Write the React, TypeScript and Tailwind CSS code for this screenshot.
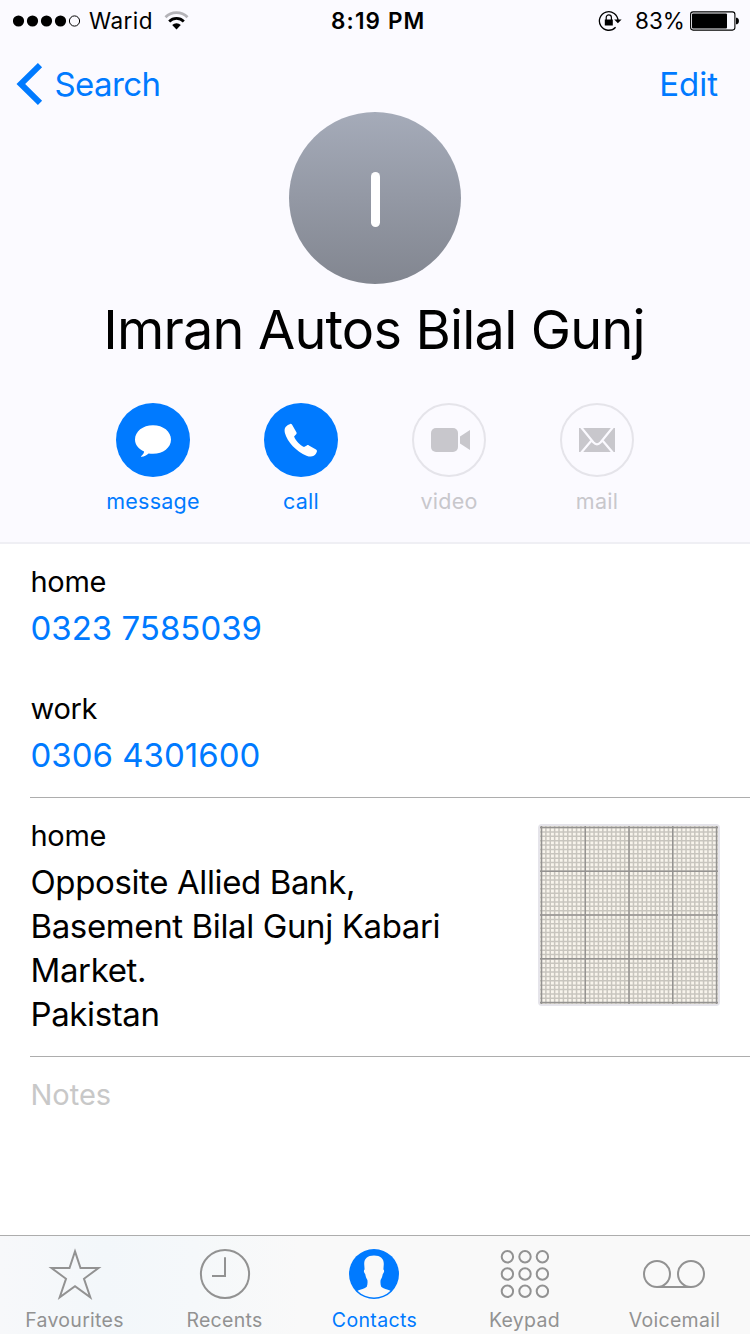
import type { ReactNode } from 'react';

const BLUE = '#007aff';
const GRAY = '#929292';

function StatusBar() {
  return (
    <div className="flex h-[41px] items-center pl-[13px] text-[22.5px] leading-10 text-black">
      <svg className="h-3 w-[68px]" viewBox="0 0 68 12">
        {[5.5, 19.5, 33.5, 47.5].map((x) => (
          <circle key={x} cx={x} cy="6" r="5.6" />
        ))}
        <circle cx="61.5" cy="6" r="5.1" fill="none" stroke="#000" strokeWidth="1" />
      </svg>
      <span className="ml-2 mt-px w-[68px] whitespace-nowrap tracking-[0.45px]">Warid</span>
      <svg className="ml-[7px] h-[19px] w-[25px]" viewBox="0 0 25 19" fill="none">
        <path d="M1.5 6.2a15.5 15.5 0 0 1 22 0" stroke="#b4b3b8" strokeWidth="2.8" />
        <path d="M5.2 10.4a10.4 10.4 0 0 1 14.6 0" stroke="#000" strokeWidth="2.8" />
        <path d="M12.5 18.4L8.2 14.1a6.1 6.1 0 0 1 8.6 0z" fill="#000" />
      </svg>
      <span className="ml-[142px] mt-px w-[97px] whitespace-nowrap font-semibold tracking-[1.15px]">8:19 PM</span>
      <svg className="ml-[170px] h-[22px] w-[25px]" viewBox="0 0 25 22" fill="none">
        <path d="M20 10.8A9.3 9.3 0 1 0 17.6 17.2" stroke="#000" strokeWidth="1.3" />
        <path d="M16.2 9.6h7.4l-3.7 3.6z" fill="#000" />
        <rect x="6.8" y="9.5" width="8" height="6" fill="#000" />
        <path d="M8.2 10V7.4a2.6 2.6 0 0 1 5.2 0V10" stroke="#000" strokeWidth="1.2" />
      </svg>
      <span className="ml-[12px] mt-px w-[50px] whitespace-nowrap">83%</span>
      <svg className="ml-[5px] h-5 w-[50px] shrink-0" viewBox="0 0 50 20">
        <rect x="0.6" y="0.9" width="44.3" height="18.2" rx="2.5" fill="none" stroke="#000" strokeWidth="1.1" />
        <rect x="2" y="2.4" width="35" height="15.2" rx="1" />
        <path d="M46 6.7h1.2q1.8 1 1.8 3.3t-1.8 3.3H46z" />
      </svg>
    </div>
  );
}

function NavBar() {
  return (
    <div className="flex h-[71px] justify-between pl-4 pr-8 pt-[23px] text-[33px] leading-10 text-[#007aff]">
      <div className="flex">
        <svg className="-mt-[2px] h-11 w-7" viewBox="0 0 28 44" fill="none">
          <path d="M24 3.2L4.8 22L24 40.8" stroke={BLUE} strokeWidth="6" />
        </svg>
        <span className="ml-[10.5px] tracking-[-0.6px]">Search</span>
      </div>
      <span>Edit</span>
    </div>
  );
}

function Action({ label, active, children }: { label: string; active?: boolean; children: ReactNode }) {
  return (
    <div className="flex w-[148px] flex-col items-center">
      <div
        className={
          active
            ? 'flex size-[74px] items-center justify-center rounded-full bg-[#007aff]'
            : 'flex size-[74px] items-center justify-center rounded-full border-2 border-[#e5e4ea]'
        }
      >
        <svg className="size-[70px] shrink-0" viewBox="0 0 70 70">
          {children}
        </svg>
      </div>
      <span
        className={
          active
            ? 'mt-[9px] text-[21.5px] leading-[30px] tracking-[0.25px] text-[#007aff]'
            : 'mt-[9px] text-[21.5px] leading-[30px] tracking-[0.25px] text-[#c8c7cc]'
        }
      >
        {label}
      </span>
    </div>
  );
}

function Actions() {
  return (
    <div className="mt-[41px] flex justify-center">
      <Action label="message" active>
        <path
          d="M35 20.2c10.2 0 18 6.2 18 14.3s-7.8 14.3-18 14.3c-1.6 0-3-.1-4.4-.4-2 1.9-4.6 3.3-6.9 3.4-.9 0-1-.5-.4-.9 1.5-.9 2.5-2.3 2.8-4.3C20.5 44 17 39.6 17 34.5c0-8.1 7.8-14.3 18-14.3z"
          fill="#fff"
        />
      </Action>
      <Action label="call" active>
        <path
          d="M19.6 22c1.4-1.6 3.2-2.8 4.6-3.1.8-.2 1.5.2 1.9.9l4.3 7.4c.4.7.3 1.5-.2 2.1l-2.1 2.3c1.6 4.4 6 8.7 9.9 10.5l2.8-1.7c.7-.4 1.4-.4 2.1 0l7.1 4c.8.5 1.2 1.2.9 2-.6 1.9-1.9 3.8-3.6 4.7-1.5.8-4.3.6-6.8-.4C30.5 46.7 21.2 36.9 18.9 28c-.5-2.2-.5-4.6.7-6z"
          fill="#fff"
        />
      </Action>
      <Action label="video">
        <rect x="17" y="23" width="27" height="24" rx="5" fill="#c8c7cc" />
        <path d="M46 31.5L56 25v20l-10-6.5z" fill="#c8c7cc" />
      </Action>
      <Action label="mail">
        <rect x="17" y="23" width="36" height="24" fill="#c8c7cc" />
        <path
          d="M18.5 21.5L31.3 37.3q3.7 4.2 7.4 0L51.5 21.5M18.5 48.5L29.5 35.5M51.5 48.5L40.5 35.5"
          fill="none"
          stroke="#fbfaff"
          strokeWidth="2.2"
        />
      </Action>
    </div>
  );
}

function Phone({ label, number }: { label: string; number: string }) {
  return (
    <div className="h-[127px] pl-[0.5px]">
      <p className="text-[29px] leading-10 tracking-[-0.3px] text-black">{label}</p>
      <p className="mt-1 text-[33px] leading-[44px] text-[#007aff]">{number}</p>
    </div>
  );
}

function MapThumb() {
  const minor = Array.from({ length: 41 }, (_, i) => 1.5 + i * 4.38);
  const major = [1.5, 45.3, 89, 132.7, 176.5];
  return (
    <div className="size-[182px] rounded-[4px] border-2 border-[#e5e4ea] bg-[#f8f4ec]">
      <svg className="size-[178px]" viewBox="0 0 178 178">
        {minor.map((p) => (
          <path key={p} d={`M${p} 0V178M0 ${p}H178`} stroke="#c8c5be" strokeWidth="1.5" />
        ))}
        {major.map((p) => (
          <path key={p} d={`M${p} 0V178M0 ${p}H178`} stroke="#959391" strokeWidth="1.4" />
        ))}
      </svg>
    </div>
  );
}

function Tab({ label, active, children }: { label: string; active?: boolean; children: ReactNode }) {
  return (
    <div className="flex w-[150px] flex-col items-center pt-3">
      <svg className="h-[54px] w-16 shrink-0" viewBox="0 0 64 54" fill="none" stroke={GRAY} strokeWidth="2">
        {children}
      </svg>
      <span
        className={
          active
            ? 'mr-px mt-1 text-[19.5px] leading-7 tracking-[0.35px] text-[#007aff]'
            : 'mr-px mt-1 text-[19.5px] leading-7 tracking-[0.3px] text-[#929292]'
        }
      >
        {label}
      </span>
    </div>
  );
}

function TabBar() {
  return (
    <div className="flex h-[99px] border-t border-[#adadad] bg-[linear-gradient(90deg,#f7f8fa_0%,#f3f7fa_14%,#f5f8fa_26%,#f9f9f9_40%)]">
      <Tab label="Favourites">
        <path d="M32 3.4L37.5 20H55.5L41 30.8L47.3 49.3L32 38.2L16.7 49.3L23 30.8L8.5 20H26.5z" />
      </Tab>
      <Tab label="Recents">
        <circle cx="32" cy="26" r="24.1" />
        <path d="M32 9.3V28H19" />
      </Tab>
      <Tab label="Contacts" active>
        <circle cx="31" cy="26" r="25" fill={BLUE} stroke="none" />
        <path
          d="M31 7.5c6.5 0 9.800 3 9.800 8.500l-.4 5.500c1.200.6.8 3.200-.6 4.500-.4 2.500-1.300 4.500-2.200 6-.3 2.500-.2 4.500.6 6.800 2 2.200 6 2.400 9.300 3.900C43 47.200 37.500 49.500 31 49.500S19 47.200 14.500 42.700c3.300-1.500 7.300-1.700 9.300-3.900.8-2.300.9-4.300.6-6.800-.9-1.500-1.800-3.500-2.200-6-1.400-1.300-1.800-3.900-.6-4.500l-.4-5.500c0-5.500 3.300-8.500 9.800-8.500z"
          fill="#f9f9f9"
          stroke="none"
        />
      </Tab>
      <Tab label="Keypad">
        {[8.7, 26, 43.3].map((y) =>
          [14.4, 32, 49.4].map((x) => <circle key={`${x}-${y}`} cx={x} cy={y} r="5.7" />)
        )}
      </Tab>
      <Tab label="Voicemail">
        <circle cx="14" cy="26" r="13" />
        <circle cx="48" cy="26" r="13" />
        <path d="M14 39h34" />
      </Tab>
    </div>
  );
}

export default function App() {
  return (
    <div className="flex h-[1334px] w-[750px] flex-col overflow-hidden bg-white font-['Inter','Liberation_Sans',sans-serif]">
      <header className="h-[544px] shrink-0 border-b-2 border-[#efeff4] bg-[#fbfaff]">
        <StatusBar />
        <NavBar />
        <div className="mx-auto flex size-[172px] items-center justify-center rounded-full bg-gradient-to-b from-[#a5abb9] to-[#828690]">
          <div className="mt-[2px] h-[55px] w-[9px] rounded-full bg-white" />
        </div>
        <h1 className="mr-[2px] mt-[14px] whitespace-nowrap text-center text-[54px] leading-[64px] tracking-[-0.8px] text-black">
          Imran Autos Bilal Gunj
        </h1>
        <Actions />
      </header>

      <main className="flex-1 pl-[30px]">
        <section className="h-[254px] border-b border-[#adadad] pt-[18px]">
          <Phone label="home" number="0323 7585039" />
          <Phone label="work" number="0306 4301600" />
        </section>
        <section className="flex h-[259px] justify-between border-b border-[#adadad] pr-[30px] pt-[18px]">
          <div className="pl-[0.5px]">
            <p className="text-[29px] leading-10 tracking-[-0.3px] text-black">home</p>
            <p className="mt-1 whitespace-nowrap text-[33px] leading-[44px] tracking-[-0.38px] text-black">
              Opposite Allied Bank,
              <br />
              Basement Bilal Gunj Kabari
              <br />
              Market.
              <br />
              Pakistan
            </p>
          </div>
          <div className="mt-2">
            <MapThumb />
          </div>
        </section>
        <p className="pl-[0.5px] pt-[18px] text-[29px] leading-10 text-[#c8c8c8]">Notes</p>
      </main>

      <TabBar />
    </div>
  );
}
